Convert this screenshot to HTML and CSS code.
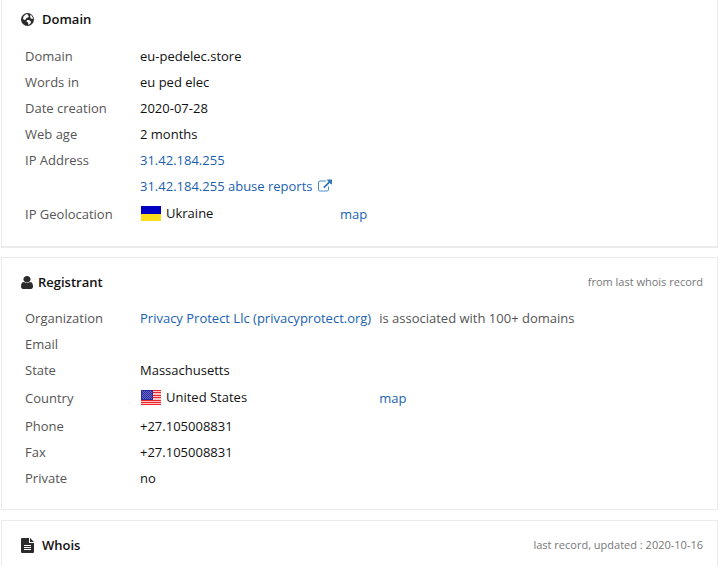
FILE: index.html
```
<!DOCTYPE html>
<html lang="en">

<head>
    <meta charset="utf-8">
    <title>eu-pedelec.store whois</title>
    <link rel="stylesheet" href="styles.css">
</head>

<body>
    <section class="card card-first">
        <div class="card-header">
            <h2>
                <svg class="icon icon-wide" width="13" height="13" viewBox="0 0 26 26">
                    <circle cx="13" cy="13" r="13" fill="#2b2b2b"/>
                    <path fill="#fff" d="M9 3l4-1 1 3 2 1-2 3-3 1-2 3-2 1-3-2 1-5z"/>
                    <path fill="#fff" d="M18 3l3 2 3 5-1 2-3-1-2-3 1-2z"/>
                    <path fill="#fff" d="M12 14l4 0 4 3-1 4-4 3-1-5-3-2z"/>
                </svg>
                Domain
            </h2>
        </div>
        <table>
            <tr>
                <th scope="row">Domain</th>
                <td>eu-pedelec.store</td>
                <td></td>
            </tr>
            <tr>
                <th scope="row">Words in</th>
                <td>eu ped elec</td>
                <td></td>
            </tr>
            <tr>
                <th scope="row">Date creation</th>
                <td>2020-07-28</td>
                <td></td>
            </tr>
            <tr>
                <th scope="row">Web age</th>
                <td>2 months</td>
                <td></td>
            </tr>
            <tr>
                <th scope="row">IP Address</th>
                <td><a href="#">31.42.184.255</a></td>
                <td></td>
            </tr>
            <tr>
                <th></th>
                <td>
                    <a href="#">31.42.184.255 abuse reports
                        <svg class="external" width="14" height="14" viewBox="0 0 1792 1792">
                            <path fill="#4a8bc9" transform="matrix(1 0 0 -1 0 1600)" d="M1408 608v-320q0 -119 -84.5 -203.5t-203.5 -84.5h-832q-119 0 -203.5 84.5t-84.5 203.5v832q0 119 84.5 203.5t203.5 84.5h704q14 0 23 -9t9 -23v-64q0 -14 -9 -23t-23 -9h-704q-66 0 -113 -47t-47 -113v-832q0 -66 47 -113t113 -47h832q66 0 113 47t47 113v320q0 14 9 23t23 9h64q14 0 23 -9t9 -23z"/>
                            <path fill="#2f76bd" transform="matrix(1 0 0 -1 0 1600)" d="M1792 1472v-512q0 -26 -19 -45t-45 -19t-45 19l-176 176l-652 -652q-10 -10 -23 -10t-23 10l-114 114q-10 10 -10 23t10 23l652 652l-176 176q-19 19 -19 45t19 45t45 19h512q26 0 45 -19t19 -45z"/>
                        </svg></a>
                </td>
                <td></td>
            </tr>
            <tr class="geo">
                <th scope="row">IP Geolocation</th>
                <td>
                    <div class="country">
                        <svg width="20" height="15" viewBox="0 0 20 15">
                            <path fill="#0000c4" d="M0 0h20v8H0z"/>
                            <path fill="#fbdf1c" d="M0 8h20v7H0z"/>
                        </svg>
                        Ukraine
                    </div>
                </td>
                <td><a href="#">map</a></td>
            </tr>
        </table>
    </section>

    <section class="card">
        <div class="card-header">
            <h2>
                <svg class="icon" width="12" height="13" viewBox="0 0 1280 1536" preserveAspectRatio="none">
                    <path fill="#2b2b2b" transform="matrix(1 0 0 -1 0 1408)" d="M1280 137q0 -109 -62.5 -187t-150.5 -78h-854q-88 0 -150.5 78t-62.5 187q0 85 8.5 160.5t31.5 152t58.5 131t94 89t134.5 34.5q131 -128 313 -128t313 128q76 0 134.5 -34.5t94 -89t58.5 -131t31.5 -152t8.5 -160.5zM1024 1024q0 -159 -112.5 -271.5t-271.5 -112.5t-271.5 112.5t-112.5 271.5t112.5 271.5t271.5 112.5t271.5 -112.5t112.5 -271.5z"/>
                </svg>
                Registrant
            </h2>
            <span class="note">from last whois record</span>
        </div>
        <table>
            <tr>
                <th scope="row">Organization</th>
                <td><a href="#">Privacy Protect Llc (privacyprotect.org)</a></td>
                <td class="muted">is associated with 100+ domains</td>
            </tr>
            <tr>
                <th scope="row">Email</th>
                <td></td>
                <td></td>
            </tr>
            <tr>
                <th scope="row">State</th>
                <td>Massachusetts</td>
                <td></td>
            </tr>
            <tr class="geo">
                <th scope="row">Country</th>
                <td>
                    <div class="country">
                        <svg width="20" height="15" viewBox="0 0 20 15">
                            <path fill="#ffc4c4" d="M0 0h20v15H0z"/>
                            <path stroke="#f0222a" d="M0 .5h20M0 2.5h20M0 5.5h20M0 7.5h20M0 10.5h20M0 12.5h20M0 14.5h20"/>
                            <path fill="#2a2a9c" d="M0 0h12v10H0z"/>
                            <path stroke="#6a6ac8" stroke-dasharray="1 1" d="M1 1.5h10M2 2.5h9M1 3.5h10M2 4.5h9M1 5.5h10M2 6.5h9M1 7.5h10M2 8.5h9"/>
                        </svg>
                        United States
                    </div>
                </td>
                <td><a href="#">map</a></td>
            </tr>
            <tr>
                <th scope="row">Phone</th>
                <td>+27.105008831</td>
                <td></td>
            </tr>
            <tr>
                <th scope="row">Fax</th>
                <td>+27.105008831</td>
                <td></td>
            </tr>
            <tr>
                <th scope="row">Private</th>
                <td>no</td>
                <td></td>
            </tr>
        </table>
    </section>

    <section class="card card-last">
        <div class="card-header">
            <h2>
                <svg class="icon icon-wide" width="13" height="15" viewBox="0 0 13 15">
                    <path fill="#2b2b2b" d="M0 1q0-1 1-1h7v5h5v9q0 1-1 1H1q-1 0-1-1zM9 0l4 4H9z"/>
                    <path stroke="#fff" d="M3 7.5h7M3 9.5h7M3 11.5h7"/>
                </svg>
                Whois
            </h2>
            <span class="note">last record, updated : 2020-10-16</span>
        </div>
    </section>
</body>

</html>
```
FILE: styles.css
```
* {
    box-sizing: border-box;
}

body {
    display: flex;
    flex-direction: column;
    gap: 10px;
    min-height: 100vh;
    margin: 0;
    padding: 0 1px;
    background: #fff;
    color: #111;
    font: 13px/18px "Open Sans", sans-serif;
}

.card {
    padding: 15px 14px 18px 19px;
    border: 1px solid #ebebeb;
}

.card-first {
    padding-top: 10px;
    padding-bottom: 17px;
    border-top: none;
    box-shadow: 0 1px #ebebeb;
}

.card-last {
    flex: 1;
    padding-bottom: 0;
    border-bottom: none;
}

.card-header {
    display: flex;
    align-items: center;
    justify-content: space-between;
    margin-bottom: 14px;
}

.card-first .card-header {
    margin-bottom: 15px;
}

.card-last .card-header {
    margin-bottom: 0;
}

h2 {
    display: flex;
    align-items: center;
    margin: 0;
    font-size: 13px;
    font-weight: 600;
}

.icon {
    margin-right: 5px;
}

.icon-wide {
    margin-right: 8px;
}

.note {
    color: #777;
    font-size: 11px;
}

table {
    border-collapse: collapse;
}

th,
td {
    height: 26px;
    padding: 4px;
    text-align: left;
    white-space: nowrap;
}

th {
    width: 115px;
    color: #555;
    font-weight: normal;
}

.geo th,
.geo td {
    height: 30px;
}

.muted {
    color: #555;
}

.country {
    display: flex;
    align-items: center;
    gap: 5px;
    padding: 0 1px 2px;
}

.external {
    margin-left: 2px;
    vertical-align: -2px;
}

a {
    color: #1a5fb0;
    text-decoration: none;
}
```
